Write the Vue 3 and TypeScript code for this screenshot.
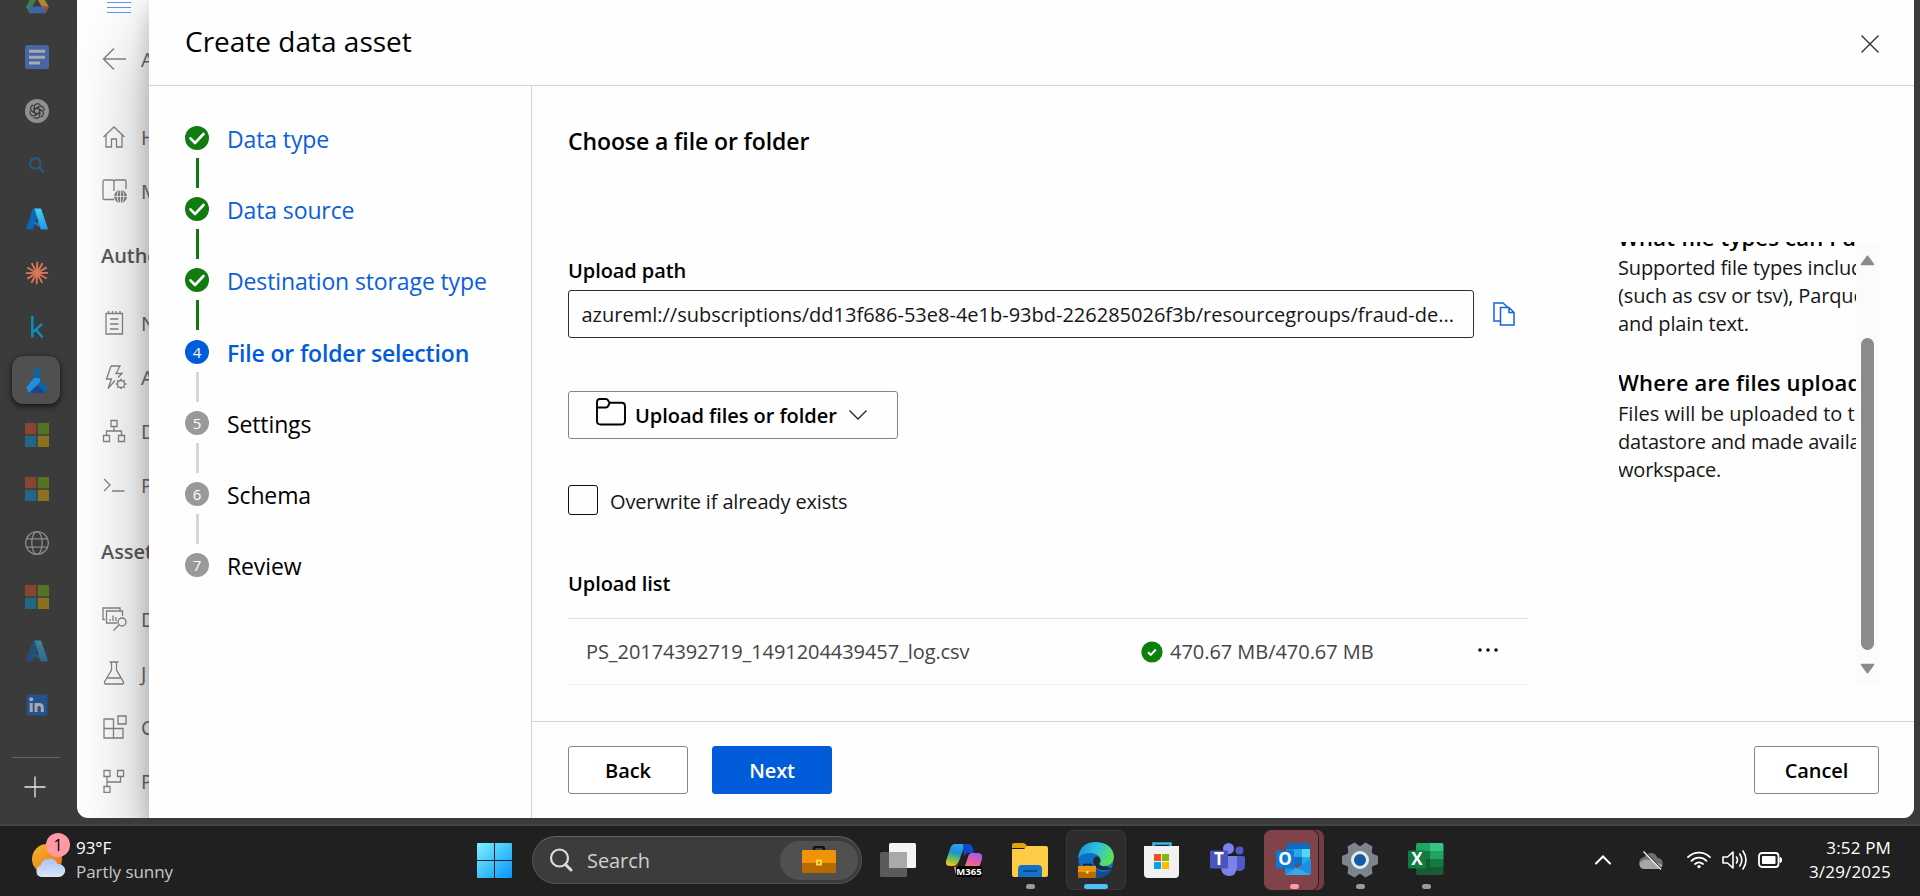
<script setup lang="ts">
type StepState = 'done' | 'active' | 'todo'
interface Step { n: number; label: string; state: StepState }
interface NavItem { icon: string; label: string }

const steps: Step[] = [
  { n: 1, label: 'Data type', state: 'done' },
  { n: 2, label: 'Data source', state: 'done' },
  { n: 3, label: 'Destination storage type', state: 'done' },
  { n: 4, label: 'File or folder selection', state: 'active' },
  { n: 5, label: 'Settings', state: 'todo' },
  { n: 6, label: 'Schema', state: 'todo' },
  { n: 7, label: 'Review', state: 'todo' },
]

const rail: string[] = ['drive', 'docs', 'gpt', 'search', 'azure', 'claude', 'kaggle', 'ml', 'ms', 'ms', 'globe', 'ms', 'azure-dim', 'linkedin']

const topNav: NavItem[] = [
  { icon: 'home', label: 'H' },
  { icon: 'catalog', label: 'M' },
]
const authoring: NavItem[] = [
  { icon: 'notebook', label: 'N' },
  { icon: 'bolt', label: 'A' },
  { icon: 'tree', label: 'D' },
  { icon: 'prompt', label: 'P' },
]
const assets: NavItem[] = [
  { icon: 'data', label: 'D' },
  { icon: 'flask', label: 'J' },
  { icon: 'blocks', label: 'C' },
  { icon: 'pipe', label: 'P' },
]
const groups: { title: string; items: NavItem[] }[] = [
  { title: '', items: topNav },
  { title: 'Autho', items: authoring },
  { title: 'Asset', items: assets },
]

const teeth = Array.from({ length: 6 }, (_, i) => i * 60 + 60)
const rays = [0, 28, 58, 88, 118, 150, 180, 208, 238, 268, 298, 330]
const petals = [0, 60, 120, 180, 240, 300]
</script>

<template>
  <div class="desktop">
    <div class="browser">
      <aside class="rail">
        <div v-for="(k, i) in rail" :key="i" class="rail-slot">
          <div :class="{ 'rail-active': k === 'ml' }">
            <svg v-if="k === 'drive'" width="24" height="24" viewBox="0 0 24 24">
              <path d="M8.5 1.5h7L24 16h-7z" fill="#ab8a2f" /><path d="M8.5 1.5L12 7.500 4 21.500 1 16z" fill="#3c7d4b" />
              <path d="M4.500 15.500H24L20.500 22.200H4z" fill="#3d64a8" /><path d="M17.500 15.500H24l-3.500 6.500z" fill="#a3483c" />
            </svg>
            <svg v-else-if="k === 'docs'" width="24" height="24" viewBox="0 0 24 24">
              <rect width="24" height="24" rx="2.500" fill="#4667a5" />
              <path d="M4 6.200h16M4 12.200h16M4 18h11" stroke="#a9a9a9" stroke-width="3" />
            </svg>
            <svg v-else-if="k === 'gpt'" width="24" height="24" viewBox="0 0 24 24">
              <circle cx="12" cy="12" r="12" fill="#909090" />
              <g fill="none" stroke="#3a3a3a" stroke-width="1.200">
                <path v-for="a in petals" :key="a" :transform="`rotate(${a} 12 12)`" d="M9.300 13.600V7.800a3.300 3.300 0 0 1 6-1.700M9.300 10.500L14.200 7.600" />
              </g>
            </svg>
            <svg v-else-if="k === 'search'" width="24" height="24" viewBox="0 0 24 24" fill="none" stroke="#265a80" stroke-width="2">
              <circle cx="10.300" cy="10.500" r="5.200" /><path d="M14 14.300l5.300 5.200" stroke-width="2.300" />
            </svg>
            <svg v-else-if="k === 'azure' || k === 'azure-dim'" width="24" height="24" viewBox="0 0 24 24" :class="{ dim: k === 'azure-dim' }">
              <defs>
                <linearGradient id="azl" x1="0" y1="0" x2="0" y2="1"><stop offset="0" stop-color="#1268ac" /><stop offset="1" stop-color="#0a63c0" /></linearGradient>
                <linearGradient id="azr" x1="0" y1="0" x2="0" y2="1"><stop offset="0" stop-color="#43d0f5" /><stop offset="1" stop-color="#2494e6" /></linearGradient>
              </defs>
              <path d="M8.800 1.500H15L8.200 21.600Q7.800 22.500 7 22.500H2.200Q1 22.500 1.300 21.300L7.600 2.500Q8 1.500 8.800 1.500z" fill="url(#azl)" />
              <path d="M6.500 15.200H16l-1.500 5z" fill="#0f78d0" />
              <path d="M9.500 1.500h5.500q1 0 1.400 1l6.300 18.800q.3 1.200-.9 1.200h-6z" fill="url(#azr)" />
            </svg>
            <svg v-else-if="k === 'claude'" width="24" height="24" viewBox="0 0 24 24" stroke="#d97757" stroke-width="1.900">
              <path v-for="a in rays" :key="a" :transform="`rotate(${a} 12 12)`" d="M12 12L12.300 .8" /><circle cx="12" cy="12" r="3" fill="#d97757" stroke="none" />
            </svg>
            <svg v-else-if="k === 'kaggle'" width="24" height="24" viewBox="0 0 24 24" fill="none" stroke="#0a8fbf" stroke-width="2.500">
              <path d="M7.300 1v21.500M17 8.800l-8.500 8M10.500 14l7 8.500" />
            </svg>
            <svg v-else-if="k === 'ml'" width="24" height="24" viewBox="0 0 24 24">
              <path d="M7.500 17.500h10L21 24H2.500z" fill="#1d4590" /><path d="M9 0h6v9.500H9z" fill="#0a66ac" />
              <path d="M9 9h6v4L4 24 1.200 18.500z" fill="#2090dd" /><path d="M16.800 12L23 19.200 20 24l-7-8z" fill="#0b63a8" />
            </svg>
            <svg v-else-if="k === 'ms'" width="24" height="24" viewBox="0 0 24 24">
              <path d="M0 0h11.300v11.300H0z" fill="#8b4432" /><path d="M12.700 0H24v11.300H12.700z" fill="#567223" />
              <path d="M0 12.700h11.300V24H0z" fill="#236787" /><path d="M12.700 12.700H24V24H12.700z" fill="#8c7022" />
            </svg>
            <svg v-else-if="k === 'globe'" width="24" height="24" viewBox="0 0 24 24" fill="none" stroke="#8c8c8c" stroke-width="1.300">
              <circle cx="12" cy="12" r="11.300" /><ellipse cx="12" cy="12" rx="5.200" ry="11.300" /><path d="M1.800 7.800h20.400M1.800 16.200h20.400" />
            </svg>
            <svg v-else width="24" height="24" viewBox="0 0 24 24">
              <rect x="1.500" y="1.500" width="21" height="21" rx="1.500" fill="#24528a" />
              <path d="M6.200 10v9M11 10v9M11 14.500c0-4 6.300-4 6.300 0V19" fill="none" stroke="#a9a9a9" stroke-width="3" /><circle cx="6.200" cy="6.200" r="2" fill="#a9a9a9" />
            </svg>
          </div>
        </div>
        <div class="rail-line"></div>
        <svg class="rail-plus" width="22" height="22" viewBox="0 0 22 22"><path d="M11 .5v21M.5 11h21" stroke="#e8e8e8" stroke-width="1.300" /></svg>
      </aside>

      <main class="page">
        <nav class="nav">
          <div class="nav-menu">
            <svg width="24" height="14" viewBox="0 0 24 14"><path d="M0 2.500h24M0 7.500h24M0 12.500h24" stroke="#5c97ec" stroke-width="1.200" /></svg>
          </div>
          <div class="nav-row back">
            <svg width="25" height="24" viewBox="0 0 25 24" fill="none" stroke="#858585" stroke-width="1.500"><path d="M1 12h23M12 1.500L1.500 12 12 22.500" /></svg>
            <span>A</span>
          </div>
          <template v-for="g in groups" :key="g.title">
            <div v-if="g.title" class="nav-title">{{ g.title }}</div>
            <div v-for="it in g.items" :key="it.label" class="nav-row">
              <svg width="25" height="24" viewBox="0 0 25 24" fill="none" stroke="#858585" stroke-width="1.300">
                <path v-if="it.icon === 'home'" d="M1.500 12L12 2l10.500 10M4 10v12h5.500v-8h5v8H20V10" />
                <template v-else-if="it.icon === 'catalog'">
                  <path d="M12 20.500H2.500q-1.500 0-1.500-1.500V2.500Q1 1 2.500 1h8q1.500 0 1.500 2v9M12 3q0-2 1.500-2H23q1 0 1 1.500V10" />
                  <circle cx="18.500" cy="17.500" r="6.500" fill="#858585" stroke="none" /><g stroke="#f4f4f4" stroke-width=".9"><path d="M11.500 17.500h14M18.500 11v13" /><ellipse cx="18.500" cy="17.500" rx="3.300" ry="6.500" /></g>
                </template>
                <path v-else-if="it.icon === 'notebook'" d="M4 2.500h16.500v20.500H4zM6.500 0v3M10.500 0v3M14 0v3M18 0v3M8 8h8.500M8 13h8.500M8 18h8.500" />
                <template v-else-if="it.icon === 'bolt'">
                  <path d="M9 1h9l-4 7.500h6l-4 4M9 1L4.500 14h5L6 23.500l7-8" /><circle cx="19" cy="19" r="3.500" />
                  <path d="M19 13.500v2M19 22.500v2M13.500 19h2M22.500 19h2M15.200 15.200l1.300 1.300M21.500 21.500l1.300 1.300M15.200 22.800l1.300-1.300M21.500 16.500l1.300-1.300" />
                </template>
                <path v-else-if="it.icon === 'tree'" d="M9 1.500h6v6H9zM1.500 16.500h6v6h-6zM16.500 16.500h6v6h-6zM12 7.500V12M4.500 16.500V12h15v4.500" />
                <path v-else-if="it.icon === 'prompt'" d="M2 6l6 6-6 6M10 18h12.500" />
                <template v-else-if="it.icon === 'data'">
                  <path d="M3 12.500H1V1h17v3M15 16H4.500V4h16v5M8 14v-2M11 14V8.500M14 14v-4" /><circle cx="20" cy="15" r="4" /><path d="M17 18l-5.500 5.500" />
                </template>
                <path v-else-if="it.icon === 'flask'" d="M7.500 1h9M9.500 1v8L2.500 21q-.5 2 1.500 2h16q2 0 1.500-2L14.500 9V1M5.500 17h13" />
                <path v-else-if="it.icon === 'blocks'" d="M2 4h9.500v9.500H2zM2 13.500h19V23H2zM11.500 13.500V23M16 1h8v8h-8z" />
                <path v-else d="M2 1.500h6v6H2zM15.500 1.500h6v6h-6zM2 17.500h6v6H2zM5 7.500v10M5 13h13.500V7.500" />
              </svg>
              <span>{{ it.label }}</span>
            </div>
          </template>
        </nav>

        <section class="panel">
          <header class="head">
            <h1>Create data asset</h1>
            <svg width="18" height="18" viewBox="0 0 18 18"><path d="M.5 .5l17 17M17.500 .5l-17 17" stroke="#333" stroke-width="1.400" /></svg>
          </header>
          <div class="body">
            <ol class="steps">
              <li v-for="s in steps" :key="s.n" :class="s.state">
                <div class="mark">
                  <svg v-if="s.state === 'done'" width="24" height="24" viewBox="0 0 24 24"><path d="M5.500 12.300l4.500 4.700 8.500-9" fill="none" stroke="#fff" stroke-width="2.600" stroke-linecap="round" stroke-linejoin="round" /></svg>
                  <template v-else>{{ s.n }}</template>
                </div>
                <span>{{ s.label }}</span>
              </li>
            </ol>

            <div class="content">
              <div class="scroll">
                <div class="form">
                  <h2>Choose a file or folder</h2>
                  <label class="bold path-label">Upload path</label>
                  <div class="path-row">
                    <div class="path">azureml://subscriptions/dd13f686-53e8-4e1b-93bd-226285026f3b/resourcegroups/fraud-de...</div>
                    <svg width="22" height="24" viewBox="0 0 22 24" fill="none" stroke="#1065e0" stroke-width="1.500"><path d="M7.500 19H1V1h9l5 4.500M7.500 5.500H16l5 5V23H7.500zM16 5.500v5h5" /></svg>
                  </div>
                  <div class="upload">
                    <svg width="30" height="28" viewBox="0 0 30 28" fill="none" stroke="#000" stroke-width="1.900"><path d="M1 9.500V4q0-3 3-3h6q1.500 0 2.500 2l1 1.700h12q3.500 0 3.500 3.500V23q0 3.500-3.500 3.500H4.500Q1 26.500 1 23V9.500h9q1.300 0 2-1.300l1.800-3.500" /></svg>
                    <span>Upload files or folder</span>
                    <svg width="18" height="10" viewBox="0 0 18 10" fill="none" stroke="#222" stroke-width="1.300"><path d="M.5 .5L9 9 17.500 .5" /></svg>
                  </div>
                  <div class="check"><i></i><span>Overwrite if already exists</span></div>
                  <div class="bold list-title">Upload list</div>
                  <div class="file">
                    <span class="name">PS_20174392719_1491204439457_log.csv</span>
                    <svg width="22" height="22" viewBox="0 0 22 22"><circle cx="11" cy="11" r="10.600" fill="#0b800b" /><path d="M7 11.300l2.800 2.700 5-5.500" fill="none" stroke="#fff" stroke-width="1.900" /></svg>
                    <span class="size">470.67 MB/470.67 MB</span>
                    <svg class="more" width="22" height="6" viewBox="0 0 22 6" fill="#111"><circle cx="3" cy="3" r="1.800" /><circle cx="11" cy="3" r="1.800" /><circle cx="19" cy="3" r="1.800" /></svg>
                  </div>
                </div>

                <div class="help">
                  <div class="help-text">
                    <h3>What file types can I u</h3>
                    <p class="tight">Supported file types includ<br />(such as csv or tsv), Parque<br />and plain text.</p>
                    <h3 class="second">Where are files upload</h3>
                    <p class="after">Files will be uploaded to t<br /><span class="narrow">datastore and made availa</span><br /><span class="narrow">workspace.</span></p>
                  </div>
                  <div class="bar">
                    <svg width="15" height="11" viewBox="0 0 15 11"><path d="M7.500 1.300L13.500 9.500h-12z" fill="#8b8b8b" stroke="#8b8b8b" stroke-width="1.600" stroke-linejoin="round" /></svg>
                    <div class="thumb"></div>
                    <svg width="15" height="11" viewBox="0 0 15 11"><path d="M7.500 9.700L13.500 1.500h-12z" fill="#8b8b8b" stroke="#8b8b8b" stroke-width="1.600" stroke-linejoin="round" /></svg>
                  </div>
                </div>
              </div>
              <footer class="foot">
                <button type="button">Back</button>
                <button type="button" class="primary">Next</button>
                <button type="button" class="cancel">Cancel</button>
              </footer>
            </div>
          </div>
        </section>
      </main>
    </div>

    <div class="taskbar">
      <div class="weather">
        <div class="sun">
          <svg width="34" height="36" viewBox="0 0 34 36">
            <defs>
              <linearGradient id="sun" x1="0" y1="0" x2="1" y2="1"><stop offset="0" stop-color="#f0b92e" /><stop offset="1" stop-color="#ee6a10" /></linearGradient>
              <linearGradient id="cl" x1="0" y1="0" x2="0" y2="1"><stop offset="0" stop-color="#a9c3f2" /><stop offset="1" stop-color="#dbe6fb" /></linearGradient>
            </defs>
            <circle cx="15" cy="17" r="15" fill="url(#sun)" />
            <path d="M9 35a6 6 0 0 1-.5-11.500 9 9 0 0 1 17-1.500A7 6.500 0 0 1 27 35z" fill="url(#cl)" />
          </svg>
          <b>1</b>
        </div>
        <div class="wtext"><span>93°F</span><span class="muted">Partly sunny</span></div>
      </div>

      <div class="slot">
        <svg width="35" height="35" viewBox="0 0 35 35">
          <defs><linearGradient id="win" x1="0" y1="0" x2="1" y2="1"><stop offset="0" stop-color="#80f0ff" /><stop offset=".5" stop-color="#3fc4fb" /><stop offset="1" stop-color="#0a94fb" /></linearGradient></defs>
          <path d="M1 0h16v17H0V1q0-1 1-1zM18 0h16q1 0 1 1v16H18zM0 18h17v17H1q-1 0-1-1zM18 18h17v16q0 1-1 1H18z" fill="url(#win)" />
        </svg>
      </div>

      <div class="search">
        <svg width="24" height="24" viewBox="0 0 24 24" fill="none" stroke="#dcdcdc"><circle cx="10.500" cy="10" r="8.500" stroke-width="2.200" /><path d="M16.500 16.500L22 22" stroke-width="3" stroke-linecap="round" /></svg>
        <span>Search</span>
        <div class="case">
          <svg width="34" height="28" viewBox="0 0 34 28">
            <path d="M12 5V3q0-2 2-2h6q2 0 2 2v2" fill="none" stroke="#111" stroke-width="2.500" />
            <rect y="4" width="34" height="23" rx="1.500" fill="#b76a00" /><path d="M1.500 4h31q1.500 0 1.500 1.500V17H0V5.500Q0 4 1.500 4z" fill="#f09307" /><rect x="14" y="13.500" width="6" height="6" fill="#ffd93b" /><path d="M16 16h2v1.500h-2z" fill="#a86600" />
          </svg>
        </div>
      </div>

      <div class="apps">
        <div class="slot">
          <svg width="36" height="35" viewBox="0 0 36 35">
            <rect x="9" y="0" width="27" height="25" rx="1.500" fill="#f4f4f4" /><rect x="0" y="9" width="27" height="25" rx="1.500" fill="#5b5b5b" /><path d="M9 9h18v16H9z" fill="#a9a9a9" />
          </svg>
        </div>
        <div class="slot">
          <div class="copilot">
            <svg width="36" height="34" viewBox="0 0 36 34">
              <defs>
                <linearGradient id="c1" x1=".6" y1="0" x2=".3" y2="1"><stop offset="0" stop-color="#2aa6f2" /><stop offset=".4" stop-color="#1e8fd8" /><stop offset=".65" stop-color="#5cbb6a" /><stop offset="1" stop-color="#f4c318" /></linearGradient>
                <linearGradient id="c2" x1=".8" y1="0" x2=".3" y2="1"><stop offset="0" stop-color="#a05cf0" /><stop offset=".6" stop-color="#ec5aa2" /><stop offset="1" stop-color="#f78552" /></linearGradient>
              </defs>
              <path d="M9 1h14q-5 2-7 9l-3 8q-2 5-6 5H4q-5 0-4-5L4 6q1.500-5 5-5z" fill="url(#c1)" />
              <path d="M17 1h5q4 0 5 5l1 4h-5q-4 0-5 4z" fill="#1545c8" />
              <path d="M26 10h6q5 0 4 6l-3 9H16q3-1 4-5l2-6q1-4 4-4z" fill="url(#c2)" />
              <path d="M8 24q3 0 4-2v12q-3-3-4-10z" fill="#f78552" />
            </svg>
            <em>M365</em>
          </div>
        </div>
        <div class="slot run">
          <svg width="36" height="34" viewBox="0 0 36 34">
            <path d="M0 2q0-2 2-2h9q2 0 3 1.500L16 5H0z" fill="#e0a10c" /><path d="M0 6h12l3-3h19q2 0 2 2v27q0 2-2 2H2q-2 0-2-2z" fill="#fdcb45" />
            <path d="M6 34v-8q0-4 4-4h16q4 0 4 4v8z" fill="#1272c6" /><path d="M11 28h14" stroke="#0a4a8c" stroke-width="2" />
          </svg>
        </div>
        <div class="slot tile current">
          <svg width="36" height="36" viewBox="0 0 36 36">
            <defs>
              <linearGradient id="e1" x1="0" y1=".3" x2="1" y2=".6"><stop offset="0" stop-color="#1794e0" /><stop offset=".5" stop-color="#2fc3d8" /><stop offset="1" stop-color="#62e548" /></linearGradient>
            </defs>
            <circle cx="18" cy="18" r="17.500" fill="#0f6ec4" /><path d="M15 20q1 9 9 10 6 0 10-3-4 9-15 9Q12 30 15 20z" fill="#134a94" />
            <path d="M0 16Q2 0 18 0q17 1 18 15-1 9-10 9-5 0-5-2.500 3-3 0-7Q18 11 12 11 4 11 0 16z" fill="url(#e1)" />
            <path d="M15 18q2-5 6-3 3 4 0 7 2 3 8 2.500l5 2.500-6 1q-12 1-13-10z" fill="#24292e" />
            <path d="M6 24v-1.500h7V24" fill="none" stroke="#222" stroke-width="1.500" /><rect y="24" width="18" height="12" rx="1" fill="#b76a00" /><path d="M0 24h18v6H0z" fill="#ec9412" /><path d="M8 29h2.500v2.500H8z" fill="#ffe14a" />
          </svg>
        </div>
        <div class="slot">
          <svg width="36" height="36" viewBox="0 0 36 36">
            <path d="M9.500 7V1.500h17V7" fill="none" stroke="#35b6f2" stroke-width="2.500" /><path d="M0 4h35v28q0 4-4 4H4q-4 0-4-4z" fill="#f1f1f1" />
            <path d="M10 12h7v7h-7z" fill="#f25022" /><path d="M18 12h7v7h-7z" fill="#7fba00" /><path d="M10 20h7v7h-7z" fill="#00a4ef" /><path d="M18 20h7v7h-7z" fill="#ffb900" />
          </svg>
        </div>
        <div class="slot">
          <svg width="36" height="34" viewBox="0 0 36 34">
            <circle cx="18.500" cy="5.500" r="5.500" fill="#7b83eb" /><circle cx="29.500" cy="7.500" r="4" fill="#5059c9" />
            <path d="M24 13h9q2 0 2 2v7q0 6-6 6-3 0-5-2z" fill="#5059c9" /><path d="M11 13h16v10q0 10-8 10-7 0-8-8z" fill="#7b83eb" />
            <rect y="7.500" width="18" height="18" rx="1.500" fill="#4b53bc" /><text x="9" y="21.800" class="g">T</text>
          </svg>
        </div>
        <div class="slot tile alert run">
          <svg width="36" height="34" viewBox="0 0 36 34">
            <path d="M10 2q0-2 2-2h20q2 0 2 2v18H10z" fill="#0f6cbd" /><path d="M10 6h8v8h-8z" fill="#1a86d8" /><path d="M18 6h8v8h-8z" fill="#28a8ea" /><path d="M26 6h8v8h-8z" fill="#50d9ff" /><path d="M18 14h8v8h-8z" fill="#0f6fc0" /><path d="M26 14h8v8h-8z" fill="#28a8ea" />
            <path d="M9 18l12 7 14-9v14q0 2-2 2H11q-2 0-2-2z" fill="#1f8fe4" /><path d="M9 32l12-7 14 7z" fill="#3aa7ee" />
            <rect y="7.500" width="18" height="18" rx="1.500" fill="#0f78d4" /><text x="9" y="22.300" class="g">O</text>
          </svg>
        </div>
        <div class="slot run">
          <svg width="36" height="36" viewBox="-18 -18 36 36">
            <circle r="14" fill="#7c858e" /><path v-for="a in teeth" :key="a" :transform="`rotate(${a})`" d="M-12 -6.500L-17 -4.500q-1 0-1 1V3.500q0 1 1 1L-12 6.500z" fill="#7c858e" />
            <circle r="7.500" fill="#0f5da8" stroke="#e9e9e9" stroke-width="3" />
          </svg>
        </div>
        <div class="slot run">
          <svg width="36" height="34" viewBox="0 0 36 34">
            <path d="M8 2q0-2 2-2h12v8H8z" fill="#21a366" /><path d="M22 0h12q1.500 0 1.500 2v6H22z" fill="#33c481" /><path d="M8 8h14v8H8z" fill="#107c41" /><path d="M22 8h13.500v8H22z" fill="#21a366" /><path d="M8 16h14v8H8z" fill="#185c37" /><path d="M22 16h13.500v8H22z" fill="#107c41" /><path d="M8 24h27.500v6q0 2-2 2H10q-2 0-2-2z" fill="#185c37" />
            <rect y="7.500" width="18" height="18" rx="1.500" fill="#107c41" /><text x="9" y="22.300" class="g">X</text>
          </svg>
        </div>
      </div>

      <div class="tray">
        <svg width="16" height="10" viewBox="0 0 16 10"><path d="M1 8.500L8 1.500l7 7" fill="none" stroke="#fff" stroke-width="2" stroke-linecap="round" /></svg>
        <svg class="cloud" width="24" height="20" viewBox="0 0 24 20">
          <path d="M6 17a5.500 5.500 0 0 1-.5-11 7 7 0 0 1 13 1A5 5 0 0 1 19 17z" fill="#707070" /><path d="M.5 13q0-1 1-2 5-3.500 9-2l13 5q-1 4-5 4H5.500q-5 0-5-5z" fill="#a6a6a6" /><path d="M5.500 .5l17.500 18" stroke="#202020" stroke-width="1.500" /><path d="M4.500 .5l17.500 18" stroke="#eee" stroke-width="1.400" />
        </svg>
        <svg class="wifi" width="24" height="18" viewBox="0 0 24 18" fill="none" stroke="#fff" stroke-width="1.800" stroke-linecap="round">
          <path d="M1 6.200a15.500 15.500 0 0 1 22 0M4.500 9.800a10.600 10.600 0 0 1 15 0M8 13a6 6 0 0 1 8 0" /><circle cx="12" cy="15.600" r="1.700" fill="#fff" stroke="none" />
        </svg>
        <svg class="vol" width="25" height="20" viewBox="0 0 25 20" fill="none" stroke="#fff" stroke-width="1.600" stroke-linejoin="round" stroke-linecap="round">
          <path d="M1 7h4.500L11 2v16l-5.500-5H1zM14.500 7q2 3 0 6M17.800 4q4 6 0 12M21 1q6 9 0 18" />
        </svg>
        <svg class="bat" width="24" height="16" viewBox="0 0 24 16"><rect x="1" y="1" width="19.500" height="14" rx="3" fill="none" stroke="#fff" stroke-width="1.800" /><rect x="4" y="4" width="13.500" height="8" rx=".8" fill="#fff" /><path d="M22 5.500q2 .5 2 2.500t-2 2.500z" fill="#fff" stroke="#fff" /></svg>
        <div class="clock"><span>3:52 PM</span><span>3/29/2025</span></div>
      </div>
    </div>
  </div>
</template>

<style>
html, body { margin: 0; background: #202020; overflow: hidden; }
</style>

<style scoped>
.desktop { width: 1920px; height: 896px; display: flex; flex-direction: column; overflow: hidden; background: #202020; color: #000; font-family: "Open Sans", "Noto Sans", sans-serif; font-size: 20px; letter-spacing: -.07px; white-space: nowrap; }
svg { display: block; flex: none; }
h1, h2, h3, p, ol { margin: 0; padding: 0; }
.browser { height: 824px; flex: none; display: flex; background: #3b3b3b; overflow: hidden; box-sizing: border-box; }

.rail { width: 77px; flex: none; display: flex; flex-direction: column; box-sizing: border-box; margin-top: -24px; }
.rail-slot { height: 54px; width: 74px; flex: none; display: flex; align-items: center; justify-content: center; }
.rail-active { width: 48px; height: 48px; margin: -2px 0 0 -2px; border-radius: 11px; background: #505050; box-shadow: 0 3px 6px rgba(0, 0, 0, .55), 0 0 3px rgba(0, 0, 0, .4); display: flex; align-items: center; justify-content: center; }
.rail-active svg { margin-left: 2px; margin-top: 2px; }
.dim { opacity: .5; }
.rail-line { height: 1px; width: 48px; margin: 25px 0 0 12px; background: #646464; }
.rail-plus { margin: 18px 0 0 24px; }

.page { width: 1837px; height: 818px; display: flex; background: #fff; border-radius: 0 0 11px 11px; overflow: hidden; }
.nav { width: 72px; flex: none; overflow: hidden; color: #6a6a6a; box-sizing: border-box; padding-left: 25px; }
.nav-menu { height: 32px; padding-left: 5px; }
.nav-row { height: 54px; display: flex; align-items: center; }
.nav-row.back { margin-bottom: 24px; }
.nav-row span { margin-left: 14px; padding-top: 1px; }
.nav-title { margin-left: -1px; height: 73px; line-height: 75px; padding-bottom: 5px; font-weight: 600; color: #5c5c5c; }
.nav-title ~ .nav-title { height: 78px; line-height: 80px; padding-bottom: 2px; }

.panel { flex: 1; min-width: 0; display: flex; flex-direction: column; background: #fefefe; position: relative; box-shadow: 0 38px 76px rgba(0, 0, 0, .32), 0 7px 21px rgba(0, 0, 0, .2); }
.head { height: 85px; flex: none; border-bottom: 1px solid #d2d2d2; display: flex; justify-content: space-between; padding: 0 35px 0 36px; }
.head h1 { font-size: 28px; font-weight: 400; line-height: 83px; letter-spacing: 0; }
.head svg { margin-top: 35px; }
.body { flex: 1; display: flex; min-height: 0; }

.steps { width: 383px; flex: none; box-sizing: border-box; border-right: 1px solid #d2d2d2; list-style: none; padding: 40px 0 0 36px; font-size: 23px; letter-spacing: -.12px; }
.steps li { position: relative; height: 71.200px; display: flex; }
.steps li:not(:last-child)::after { content: ""; position: absolute; left: 11px; top: 32px; width: 3px; height: 30px; background: #d6d6d6; }
.steps li.done::after { background: #0f7b0f; }
.mark { width: 24px; height: 24px; border-radius: 50%; background: #999; color: #fff; font-size: 15px; line-height: 24px; text-align: center; flex: none; letter-spacing: 0; }
.done .mark { background: #107c10; }
.active .mark { background: #015cda; }
.steps span { margin-left: 18px; line-height: 27px; }
.done span { color: #0b5fdc; }
.active span { color: #015cda; font-weight: 600; letter-spacing: -.17px; }

.content { flex: 1; min-width: 0; display: flex; flex-direction: column; }
.scroll { height: 635px; flex: none; display: flex; padding-left: 36px; }
.form { width: 960px; flex: none; }
h2 { font-size: 23px; font-weight: 600; line-height: 30px; margin-top: 40px; letter-spacing: -.1px; }
.bold { font-weight: 600; }
.path-label { display: block; line-height: 28px; margin-top: 101px; }
.path-row { display: flex; align-items: center; margin-top: 5px; }
.path { width: 906px; height: 48px; box-sizing: border-box; border: 1px solid #2e2e2e; border-radius: 3px; padding-left: 12.500px; line-height: 48px; color: #161616; letter-spacing: 0; }
.path-row svg { margin-left: 19px; }
.upload { margin-top: 53px; width: 330px; height: 48px; box-sizing: border-box; border: 1px solid #858585; border-radius: 3px; display: flex; align-items: center; font-weight: 600; padding-left: 27px; }
.upload svg:first-child { margin-top: -6px; }
.upload span { margin-left: 9px; width: 202px; letter-spacing: -.05px; }
.upload svg:last-child { margin-left: 12px; }
.check { margin-top: 46px; display: flex; align-items: center; height: 30px; letter-spacing: -.14px; }
.check i { width: 30px; height: 30px; box-sizing: border-box; border: 1.500px solid #111; border-radius: 3px; }
.check span { margin-left: 12px; line-height: 30px; padding-top: 3px; color: #161616; }
.list-title { margin-top: 55px; line-height: 28px; height: 48px; }
.file { height: 67px; box-sizing: border-box; border-top: 1px solid #e3e3e3; border-bottom: 1px solid #f0f0f0; display: flex; align-items: center; color: #454545; }
.name { margin-left: 18px; width: 555px; }
.size { margin-left: 7px; width: 206px; letter-spacing: -.04px; }
.more { margin-left: 101px; margin-top: -3px; }

.help { margin: 156px 0 0 91px; width: 260px; height: 442px; display: flex; color: #161616; }
.help-text { width: 237px; overflow: hidden; }
h3 { font-size: 22px; font-weight: 600; line-height: 30px; letter-spacing: .2px; margin-top: -20px; margin-left: -1px; color: #000; }
h3.second { margin-top: 30px; }
.help p { line-height: 28px; margin-top: 1px; margin-left: -1px; }
.help .tight { letter-spacing: -.13px; padding-top: 1px; margin-bottom: -1px; }
.help .after { margin-top: 3px; letter-spacing: .03px; }
.narrow { letter-spacing: -.2px; }
.bar { width: 23px; height: 442px; background: #fbfbfb; display: flex; flex-direction: column; align-items: center; }
.bar svg { margin: 13px 0 0; }
.thumb { width: 13px; height: 312px; margin-top: 72px; background: #8b8b8b; border-radius: 7px; }

.foot { flex: 1; border-top: 1px solid #d2d2d2; display: flex; padding: 24px 35px 0 36px; }
button { height: 48px; width: 120px; box-sizing: border-box; border: 1px solid #858585; border-radius: 3px; background: #fff; font: 600 20px/44px "Open Sans", sans-serif; color: #000; padding: 2px 0 0; letter-spacing: -.1px; margin-right: 24px; }
button.primary { background: #015cda; border-color: #015cda; color: #fff; }
button.cancel { width: 125px; margin: 0 0 0 auto; }

.taskbar { height: 72px; flex: none; box-sizing: border-box; border-top: 2px solid #444; background: #202020; display: flex; align-items: flex-start; padding-top: 4px; }
.weather { width: 464px; flex: none; height: 60px; display: flex; box-sizing: border-box; padding-left: 32px; }
.sun { position: relative; margin-top: 12px; width: 34px; }
.sun b { position: absolute; left: 14px; top: -9px; width: 24px; height: 24px; border-radius: 50%; background: #ff99a4; color: #000; font-size: 16px; font-weight: 400; line-height: 24px; text-align: center; }
.wtext, .clock { display: flex; flex-direction: column; font-size: 17px; line-height: 24px; color: #fff; margin-top: 6px; }
.wtext { margin-left: 10px; }
.wtext .muted { color: #c8c8c8; }
.slot { width: 60px; height: 60px; flex: none; box-sizing: border-box; display: flex; align-items: center; justify-content: center; position: relative; }
.search { margin: 6px 6px 0 8px; width: 330px; height: 48px; flex: none; box-sizing: border-box; border: 1.500px solid #535353; border-top-color: #626262; border-radius: 24px; background: #3c3c3c; display: flex; align-items: center; padding-left: 16px; color: #cfcfcf; }
.search span { margin-left: 14px; width: 193px; }
.case { width: 78px; height: 39px; border-radius: 20px; background: #505050; display: flex; align-items: center; justify-content: center; }
.apps { display: flex; gap: 6px; }
.run::after { content: ""; position: absolute; left: 26px; bottom: 1px; width: 9px; height: 5px; border-radius: 3px; background: #9a9a9a; }
.tile { border-radius: 7px; border: 1px solid #383838; background: #2c2c2c; }
.current::after { content: ""; position: absolute; left: 17px; bottom: 0; width: 24px; height: 5px; border-radius: 3px; background: #4cc2ff; }
.alert { background: #7f4349; border-color: #7f4349; width: 54px; margin-right: 6px; box-shadow: 1px 0 0 #2a2023, 6px 0 0 #733c42; }
.alert svg { margin-left: 5px; }
.alert::after { background: #ff99a4; left: 25px; bottom: 0; }
.g { font: 700 17px "Open Sans", sans-serif; fill: #fff; text-anchor: middle; }
.copilot { position: relative; height: 34px; }
.copilot em { position: absolute; right: 0; bottom: 0; width: 26px; height: 11px; background: #000; border-radius: 2px; color: #fff; font: 700 9.500px/11px "Open Sans", sans-serif; text-align: center; letter-spacing: 0; }
.tray { flex: 1; height: 60px; display: flex; align-items: center; padding-right: 29px; justify-content: flex-end; }
.cloud { margin-left: 28px; margin-top: 2px; }
.wifi { margin-left: 24px; }
.vol { margin-left: 11px; }
.bat { margin-left: 11px; }
.clock { text-align: right; width: 109px; margin-top: 0; letter-spacing: .17px; }
</style>
